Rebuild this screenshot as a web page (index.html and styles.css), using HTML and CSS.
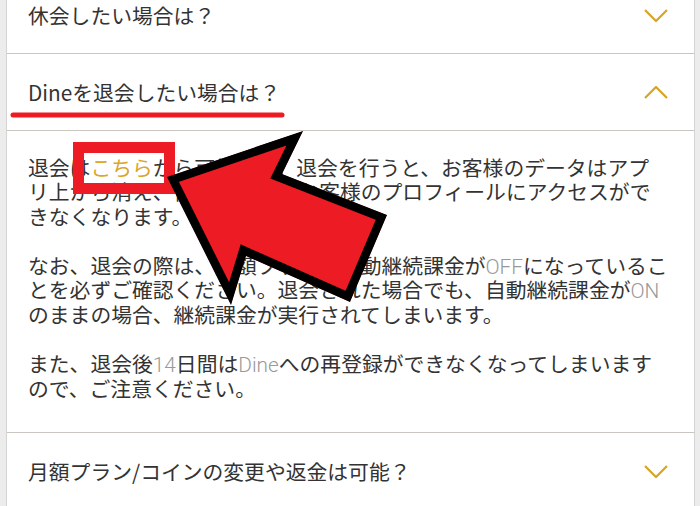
FILE: index.html
```html
<!DOCTYPE html>
<html lang="ja">
<head>
<meta charset="utf-8">
<title>FAQ</title>
<link rel="stylesheet" href="styles.css">
</head>
<body>
<div class="page">
  <div class="panel">
    <div class="faq-item first">
      <div class="faq-q">
        <span class="q-text">休会したい場合は？</span>
        <svg class="chev" viewBox="0 0 24 13" width="24" height="13"><polyline points="1,1 12,12 23,1"/></svg>
      </div>
    </div>
    <div class="faq-item open">
      <div class="faq-q">
        <span class="q-text">Dineを退会したい場合は？</span>
        <svg class="chev" viewBox="0 0 24 13" width="24" height="13"><polyline points="1,12 12,1 23,12"/></svg>
      </div>
      <div class="faq-a">
        <p>退会は<span class="link">こちら</span>から可能です。退会を行うと、お客様のデータはアプ<br>リ上から消え、他のお客様もお客様のプロフィールにアクセスがで<br>きなくなります。</p>
        <p>なお、退会の際は、月額プランの自動継続課金が<span class="en">OFF</span>になっているこ<br>とを必ずご確認ください。退会された場合でも、自動継続課金が<span class="en">ON</span><br>のままの場合、継続課金が実行されてしまいます。</p>
        <p>また、退会後<span class="en">14</span>日間は<span class="en">Dine</span>への再登録ができなくなってしまいます<br>ので、ご注意ください。</p>
      </div>
    </div>
    <div class="faq-item">
      <div class="faq-q">
        <span class="q-text">月額プラン/コインの変更や返金は可能？</span>
        <svg class="chev" viewBox="0 0 24 13" width="24" height="13"><polyline points="1,1 12,12 23,1"/></svg>
      </div>
    </div>
  </div>
  <svg class="annot" viewBox="0 0 700 506" width="700" height="506">
    <defs>
      <clipPath id="arrowClip">
        <polygon points="167,177 303,131 282,174 387,215 350,302 246,256 231,305"/>
      </clipPath>
    </defs>
    <line class="underline" x1="13" y1="115" x2="282" y2="115"/>
    <rect class="hl-box" x="78.5" y="147.5" width="91" height="41"/>
    <polygon class="arrow" clip-path="url(#arrowClip)" points="167,177 303,131 282,174 387,215 350,302 246,256 231,305"/>
  </svg>
</div>
</body>
</html>
```
FILE: styles.css
```css
html, body {
  margin: 0;
  padding: 0;
}
body {
  background: #ececec;
  font-family: "Noto Sans CJK JP", "Noto Sans", sans-serif;
  color: #333;
}
.page {
  position: relative;
  width: 700px;
  height: 506px;
  overflow: hidden;
}
.panel {
  margin: -23px 0 0 6px;
  width: 687px;
  border-left: 1px solid #d4d4d4;
  border-right: 1px solid #d4d4d4;
  background: #fff;
}
.faq-item {
  border-bottom: 1px solid #cbc5bf;
}
.faq-q {
  display: flex;
  align-items: center;
  justify-content: space-between;
  height: 76px;
  padding: 0 26px 0 21px;
  font-size: 20.8px;
}
.q-text {
  line-height: 1;
}
.chev {
  display: block;
  flex: none;
}
.chev polyline {
  fill: none;
  stroke: #d9a424;
  stroke-width: 2.2;
}
.open .faq-q {
  border-bottom: 1px solid #cbc5bf;
}
.faq-a {
  padding: 24px 10px 32px 21px;
  font-size: 20.8px;
  line-height: 24.4px;
  white-space: nowrap;
}
.faq-a p {
  margin: 0 0 24.4px;
}
.faq-a p:last-child {
  margin-bottom: 0;
}
.link {
  color: #dba62a;
}
.en {
  font-family: Roboto, "Noto Sans", sans-serif;
  font-weight: 300;
  color: #999;
  line-height: 1;
}
.annot {
  position: absolute;
  left: 0;
  top: 0;
}
.underline {
  stroke: #ed1c24;
  stroke-width: 5;
  stroke-linecap: round;
}
.hl-box {
  fill: none;
  stroke: #ed1c24;
  stroke-width: 11;
}
.arrow {
  fill: #ed1c24;
  stroke: #000;
  stroke-width: 17;
  stroke-linejoin: miter;
}
```
